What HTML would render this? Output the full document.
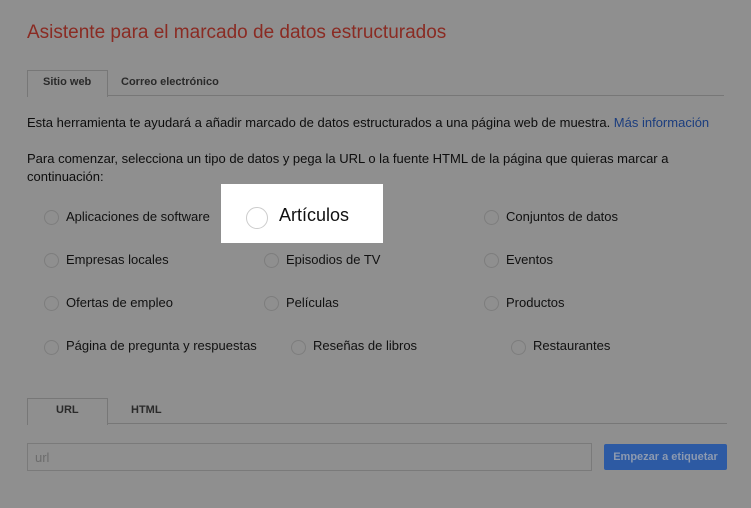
<!DOCTYPE html><html><head><meta charset="utf-8"><style>
body{margin:0;width:751px;height:508px;background:#8f8f8f;font-family:"Liberation Sans",Arial,sans-serif;position:relative;overflow:hidden;color:#0d0d0d}
.a{position:absolute;white-space:nowrap}
.r{position:absolute;width:13px;height:13px;border:1px solid #7d7d7d;border-radius:50%;background:#8f8f8f}
.l{position:absolute;font-size:13px;color:#111;white-space:nowrap}
</style></head><body>
<div class="a" style="left:27px;top:22px;font-size:19px;color:#8a2b23">Asistente para el marcado de datos estructurados</div>
<div class="a" style="left:27px;top:95px;width:697px;border-top:1px solid #777"></div>
<div class="a" style="left:27px;top:70px;width:79px;height:26px;border:1px solid #777;border-bottom:none;background:#8f8f8f"></div>
<div class="a" style="left:43px;top:76px;font-size:11px;font-weight:bold;color:#2a2a2a">Sitio web</div>
<div class="a" style="left:121px;top:76px;font-size:11px;font-weight:bold;color:#2a2a2a">Correo electrónico</div>
<div class="a" style="left:27px;top:115px;font-size:13px">Esta herramienta te ayudará a añadir marcado de datos estructurados a una página web de muestra. <span style="color:#1b3d7e">Más información</span></div>
<div class="a" style="left:27px;top:150px;font-size:13px;line-height:18px">Para comenzar, selecciona un tipo de datos y pega la URL o la fuente HTML de la página que quieras marcar a<br>continuación:</div>
<div class="a" style="left:221px;top:184px;width:162px;height:59px;background:#fff"></div>
<div class="r" style="left:246px;top:207px;width:20px;height:20px;border-color:#ccc;background:#fff"></div>
<div class="l" style="left:279px;top:205px;font-size:18px;color:#111">Artículos</div>
<div class="r" style="left:44px;top:210px"></div><div class="l" style="left:66px;top:209px">Aplicaciones de software</div>
<div class="r" style="left:484px;top:210px"></div><div class="l" style="left:506px;top:209px">Conjuntos de datos</div>
<div class="r" style="left:44px;top:253px"></div><div class="l" style="left:66px;top:252px">Empresas locales</div>
<div class="r" style="left:264px;top:253px"></div><div class="l" style="left:286px;top:252px">Episodios de TV</div>
<div class="r" style="left:484px;top:253px"></div><div class="l" style="left:506px;top:252px">Eventos</div>
<div class="r" style="left:44px;top:296px"></div><div class="l" style="left:66px;top:295px">Ofertas de empleo</div>
<div class="r" style="left:264px;top:296px"></div><div class="l" style="left:286px;top:295px">Películas</div>
<div class="r" style="left:484px;top:296px"></div><div class="l" style="left:506px;top:295px">Productos</div>
<div class="r" style="left:44px;top:340px"></div><div class="l" style="left:66px;top:338px">Página de pregunta y respuestas</div>
<div class="r" style="left:291px;top:340px"></div><div class="l" style="left:313px;top:338px">Reseñas de libros</div>
<div class="r" style="left:511px;top:340px"></div><div class="l" style="left:533px;top:338px">Restaurantes</div>
<div class="a" style="left:27px;top:423px;width:700px;border-top:1px solid #777"></div>
<div class="a" style="left:27px;top:398px;width:79px;height:26px;border:1px solid #777;border-bottom:none;background:#8f8f8f"></div>
<div class="a" style="left:56px;top:404px;font-size:11px;font-weight:bold;color:#2a2a2a">URL</div>
<div class="a" style="left:131px;top:404px;font-size:11px;font-weight:bold;color:#2a2a2a">HTML</div>
<div class="a" style="left:27px;top:443px;width:563px;height:26px;border:1px solid #7a7a7a"></div>
<div class="a" style="left:35px;top:450px;font-size:13px;color:#6c6c6c">url</div>
<div class="a" style="left:604px;top:444px;width:123px;height:26px;background:#2d5aa3;border-radius:2px;color:#8d9ab0;font-size:11px;font-weight:bold;text-align:center;line-height:26px">Empezar a etiquetar</div>
</body></html>
